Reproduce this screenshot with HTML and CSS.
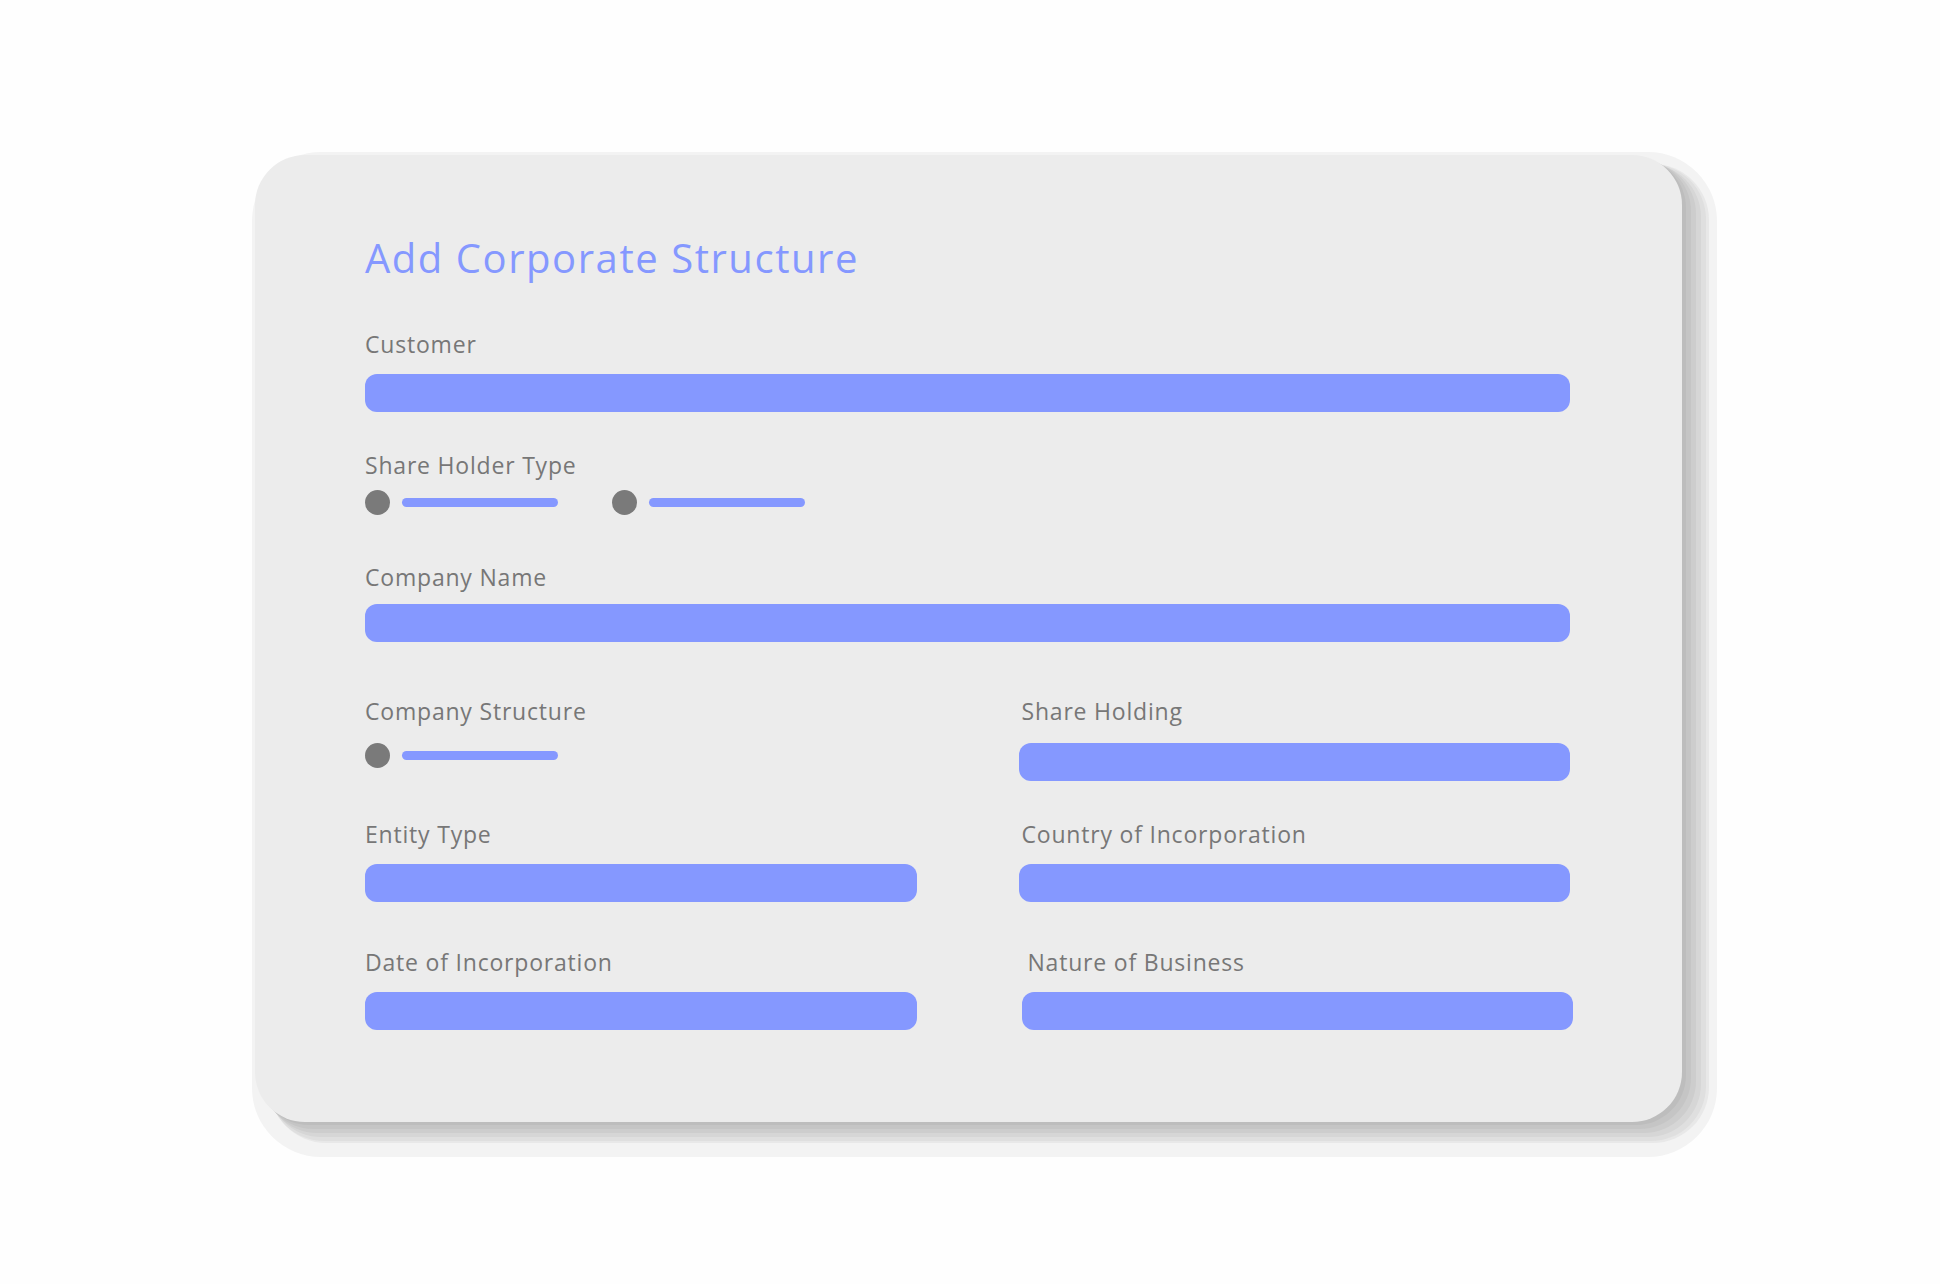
FILE: index.html
```html
<!DOCTYPE html>
<html lang="en">
<head>
<meta charset="utf-8">
<title>Add Corporate Structure</title>
<link rel="stylesheet" href="styles.css">
</head>
<body>
<main class="stage">
  <section class="card">
    <h1 class="title">Add Corporate Structure</h1>

    <div class="field field--customer">
      <span class="label">Customer</span>
      <div class="input"></div>
    </div>

    <div class="field field--holder">
      <span class="label">Share Holder Type</span>
      <div class="radio-group">
        <div class="radio"><span class="dot"></span><span class="line"></span></div>
        <div class="radio"><span class="dot"></span><span class="line"></span></div>
      </div>
    </div>

    <div class="field field--company">
      <span class="label">Company Name</span>
      <div class="input"></div>
    </div>

    <div class="row row--first">
      <div class="field field--wide-gap">
        <span class="label">Company Structure</span>
        <div class="radio-group">
          <div class="radio"><span class="dot"></span><span class="line"></span></div>
        </div>
      </div>
      <div class="field field--wide-gap">
        <span class="label label--right">Share Holding</span>
        <div class="input"></div>
      </div>
    </div>

    <div class="row row--second">
      <div class="field">
        <span class="label">Entity Type</span>
        <div class="input"></div>
      </div>
      <div class="field">
        <span class="label label--right">Country of Incorporation</span>
        <div class="input"></div>
      </div>
    </div>

    <div class="row row--third">
      <div class="field">
        <span class="label">Date of Incorporation</span>
        <div class="input"></div>
      </div>
      <div class="field field--shift">
        <span class="label label--indent">Nature of Business</span>
        <div class="input"></div>
      </div>
    </div>
  </section>
</main>
</body>
</html>
```

FILE: styles.css
```css
* {
  box-sizing: border-box;
}

html, body {
  margin: 0;
  padding: 0;
  background: #fefefe;
}

body {
  font-family: "Open Sans", "Noto Sans", "Liberation Sans", sans-serif;
}

.stage {
  padding: 155px 0 0 255px;
  min-height: 1284px;
}

.card {
  width: 1427px;
  height: 967px;
  background: #ececec;
  border-radius: 50px;
  padding: 79px 112px 0 110px;
  display: flex;
  flex-direction: column;
  box-shadow:
    4px 3px 0 0 #bdbdbd,
    8px 6px 0 1px #c5c5c5,
    12px 9px 0 2px #cdcdcd,
    16px 12px 0 3px #d6d6d6,
    19px 14px 0 5px #dfdfdf,
    21px 15px 0 6px #e8e8e8,
    16px 16px 0 19px #f3f3f3;
}

.title {
  margin: 0;
  font-size: 40px;
  line-height: 48px;
  font-weight: 400;
  letter-spacing: 1.55px;
  color: #8598ff;
}

.field {
  display: flex;
  flex-direction: column;
  gap: 18px;
}

.label {
  font-size: 23px;
  line-height: 24px;
  letter-spacing: 0.8px;
  color: #777777;
}

.label--right {
  padding-left: 3px;
}

.input {
  height: 38px;
  background: #8598ff;
  border-radius: 12px;
}

.field--customer {
  margin-top: 50px;
}

.field--holder {
  margin-top: 41px;
  gap: 13px;
}

.field--company {
  margin-top: 50px;
  gap: 15px;
}

.field--wide-gap {
  gap: 20px;
}

.field--shift {
  margin-left: 3px;
  margin-right: -3px;
}

.label--indent {
  padding-left: 6px;
}

.row {
  display: grid;
  grid-template-columns: 1fr 1fr;
  column-gap: 102px;
}

.row--first {
  margin-top: 57px;
}

.row--second {
  margin-top: 41px;
}

.row--third {
  margin-top: 48px;
}

.radio-group {
  display: flex;
  align-items: center;
  gap: 54px;
  height: 25px;
}

.radio {
  display: flex;
  align-items: center;
  gap: 12px;
}

.dot {
  width: 25px;
  height: 25px;
  border-radius: 50%;
  background: #7a7a7a;
}

.line {
  width: 156px;
  height: 9px;
  border-radius: 5px;
  background: #8598ff;
}
```
